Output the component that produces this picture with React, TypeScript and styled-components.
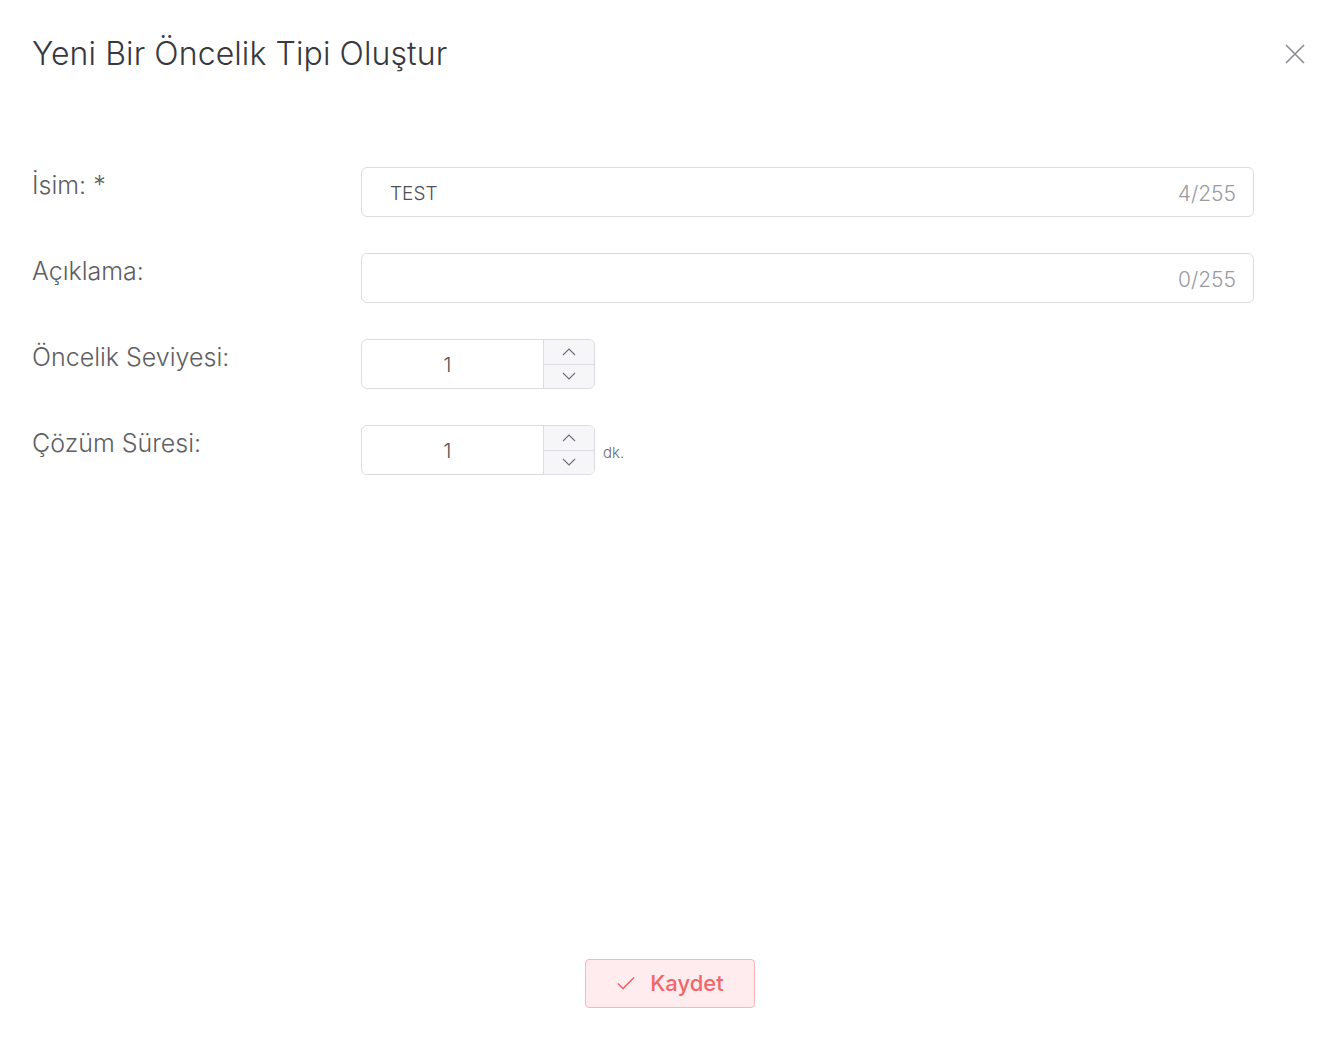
import React from "react";
import styled, { createGlobalStyle } from "styled-components";

const Global = createGlobalStyle`
  html, body { margin: 0; padding: 0; background: #fff; }
  body { font-family: Inter, "Noto Sans", "Liberation Sans", sans-serif; }
  * { box-sizing: border-box; }
`;

const Modal = styled.div`
  width: 1340px;
  height: 1050px;
  display: flex;
  flex-direction: column;
  padding: 0 32px 0 32px;
`;

const Header = styled.div`
  display: flex;
  align-items: flex-start;
  justify-content: space-between;
  padding-top: 32px;
  height: 167px;
`;

const Title = styled.h1`
  margin: 0;
  font-size: 32px;
  font-weight: 300;
  color: #38383d;
  letter-spacing: 0.1px;
  line-height: 44px;
`;

const CloseButton = styled.button`
  border: 0;
  background: none;
  padding: 0;
  margin: 10px 1px 0 0;
  width: 24px;
  height: 24px;
  display: flex;
  align-items: center;
  justify-content: center;
  cursor: pointer;
`;

const Form = styled.div`
  display: flex;
  flex-direction: column;
  gap: 36px;
  flex: 1;
`;

const Row = styled.div`
  display: flex;
  align-items: flex-start;
`;

const Label = styled.label`
  width: 329px;
  flex: none;
  font-size: 25px;
  font-weight: 300;
  color: #5e5e63;
  line-height: 36px;
`;

const TextField = styled.div`
  width: 893px;
  height: 50px;
  border: 1px solid #dcdce0;
  border-radius: 6px;
  display: flex;
  align-items: center;
  padding: 0 17px 0 28px;
`;

const FieldValue = styled.span`
  flex: 1;
  font-size: 19px;
  font-weight: 300;
  color: #505055;
  padding-top: 2px;
`;

const Counter = styled.span`
  font-size: 21px;
  font-weight: 300;
  color: #9a9aa0;
  padding-top: 2px;
`;

const NumberWrap = styled.div`
  display: flex;
  align-items: center;
  gap: 8px;
`;

const NumberField = styled.div`
  width: 234px;
  height: 50px;
  border: 1px solid #dcdce0;
  border-radius: 6px;
  display: flex;
  overflow: hidden;
`;

const NumberValue = styled.div`
  flex: 1;
  display: flex;
  align-items: center;
  justify-content: center;
  font-size: 20px;
  font-weight: 300;
  color: #505055;
  padding: 2px 10px 0 0;
`;

const Stepper = styled.div`
  width: 51px;
  flex: none;
  display: flex;
  flex-direction: column;
  border-left: 1px solid #dcdce0;
  background: #f6f6f9;
`;

const StepButton = styled.div<{ $top?: boolean }>`
  flex: 1;
  display: flex;
  align-items: center;
  justify-content: center;
  border-bottom: ${(p) => (p.$top ? "1px solid #dcdce0" : "0")};
`;

const Unit = styled.span`
  font-size: 15px;
  font-weight: 300;
  color: #6a6a70;
  padding-top: 4px;
`;

const Footer = styled.div`
  display: flex;
  justify-content: center;
  padding-bottom: 42px;
`;

const SaveButton = styled.button`
  width: 170px;
  height: 49px;
  border: 1px solid #ffb4b4;
  background: #ffecee;
  border-radius: 4px;
  display: flex;
  align-items: center;
  justify-content: center;
  gap: 14px;
  font-family: inherit;
  font-size: 22px;
  font-weight: 500;
  color: #f0666a;
  cursor: pointer;
  padding: 0 0 2px 0;
`;

const Chevron = ({ up }: { up?: boolean }) => (
  <svg width="14" height="8" viewBox="0 0 14 8" fill="none">
    <path
      d={up ? "M1 7L7 1L13 7" : "M1 1L7 7L13 1"}
      stroke="#6e6e75"
      strokeWidth="1.1"
    />
  </svg>
);

const NumberInput = ({ value }: { value: number }) => (
  <NumberField>
    <NumberValue>{value}</NumberValue>
    <Stepper>
      <StepButton $top>
        <Chevron up />
      </StepButton>
      <StepButton>
        <Chevron />
      </StepButton>
    </Stepper>
  </NumberField>
);

export default function App() {
  return (
    <>
      <Global />
      <Modal>
        <Header>
          <Title>Yeni Bir Öncelik Tipi Oluştur</Title>
          <CloseButton aria-label="Kapat">
            <svg width="20" height="20" viewBox="0 0 20 20" fill="none">
              <path d="M1 1L19 19M19 1L1 19" stroke="#8a8a90" strokeWidth="1.6" />
            </svg>
          </CloseButton>
        </Header>
        <Form>
          <Row>
            <Label>İsim: *</Label>
            <TextField>
              <FieldValue>TEST</FieldValue>
              <Counter>4/255</Counter>
            </TextField>
          </Row>
          <Row>
            <Label>Açıklama:</Label>
            <TextField>
              <FieldValue />
              <Counter>0/255</Counter>
            </TextField>
          </Row>
          <Row>
            <Label>Öncelik Seviyesi:</Label>
            <NumberInput value={1} />
          </Row>
          <Row>
            <Label>Çözüm Süresi:</Label>
            <NumberWrap>
              <NumberInput value={1} />
              <Unit>dk.</Unit>
            </NumberWrap>
          </Row>
        </Form>
        <Footer>
          <SaveButton>
            <svg width="20" height="16" viewBox="0 0 20 16" fill="none">
              <path d="M2 8.5L7 13.5L18 2.5" stroke="#f0666a" strokeWidth="1.6" />
            </svg>
            Kaydet
          </SaveButton>
        </Footer>
      </Modal>
    </>
  );
}
